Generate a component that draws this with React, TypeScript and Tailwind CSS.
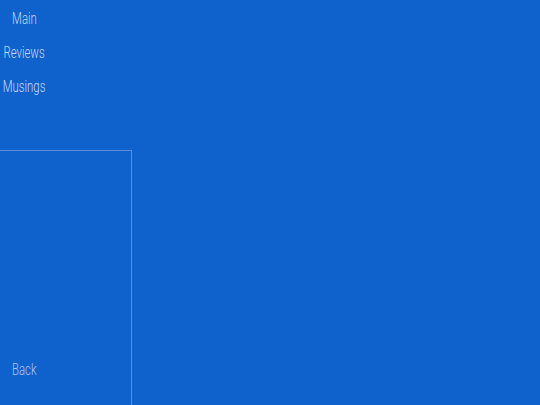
const links = ["Main", "Reviews", "Musings"]

export default function App() {
  return (
    <div
      className="flex h-[405px] w-[540px] flex-col overflow-hidden bg-[#0f61cc] text-[16px] font-light text-[#c4d8f4]"
      style={{ fontFamily: '"Roboto", sans-serif' }}
    >
      <nav className="flex w-[49px] flex-col items-center gap-[16px] pt-[10px]">
        {links.map((name) => (
          <a key={name} className="inline-block scale-x-[0.71] whitespace-nowrap leading-[18px]">
            {name}
          </a>
        ))}
      </nav>
      <div className="mt-[54px] flex w-[132px] flex-1 flex-col justify-end border-t border-r border-[#5a8edb]">
        <div className="mb-[26px] flex w-[49px] justify-center">
          <a className="inline-block scale-x-[0.71] leading-[18px] text-[#adc7ef]">Back</a>
        </div>
      </div>
    </div>
  )
}
